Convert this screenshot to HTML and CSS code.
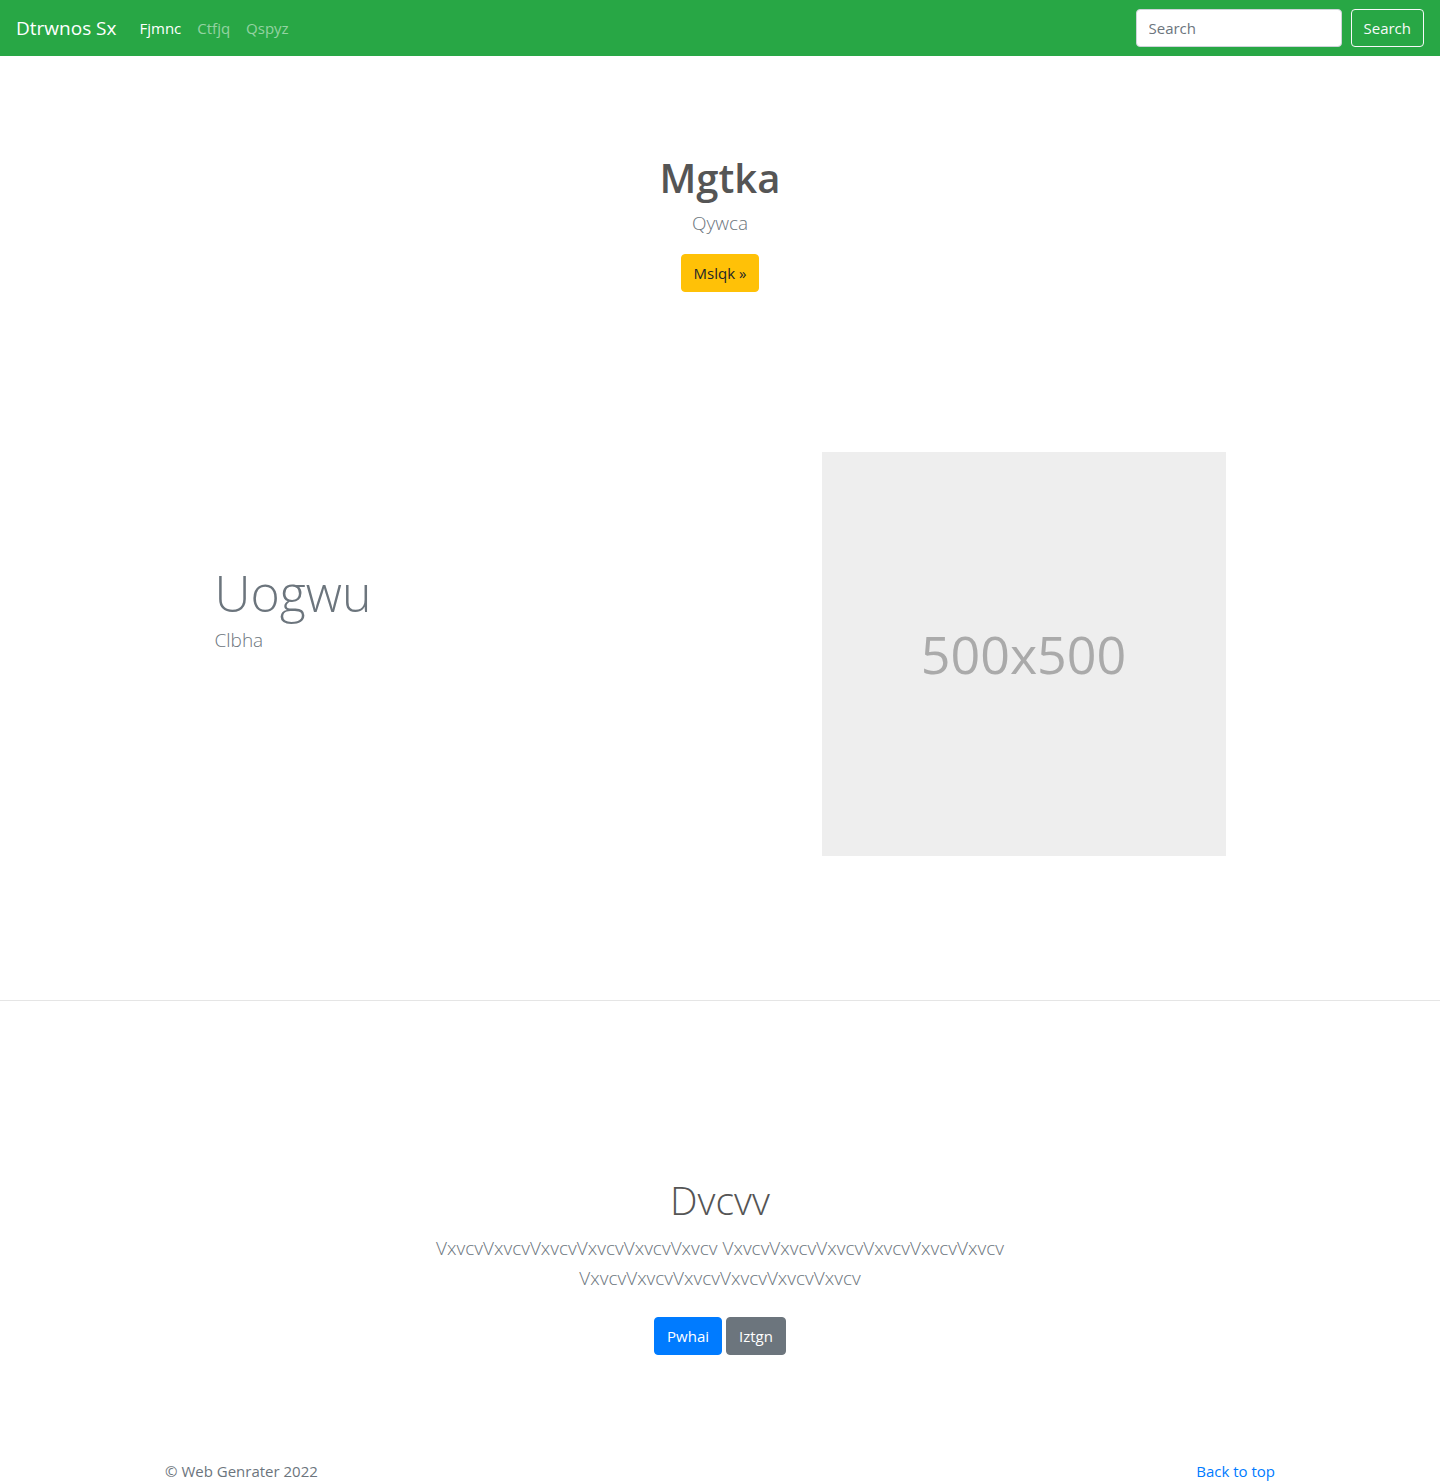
FILE: index.html
```html
<!DOCTYPE html>
<html lang="en">
<head>
<meta charset="utf-8">
<title>Dtrwnos Sx</title>
<link rel="stylesheet" href="styles.css">
</head>
<body>
<nav class="navbar">
  <a class="brand" href="#">Dtrwnos Sx</a>
  <ul class="nav-links">
    <li><a class="nav-link active" href="#">Fjmnc</a></li>
    <li><a class="nav-link" href="#">Ctfjq</a></li>
    <li><a class="nav-link" href="#">Qspyz</a></li>
  </ul>
  <form class="search">
    <input class="search-input" type="text" placeholder="Search">
    <button class="btn btn-outline-light" type="button">Search</button>
  </form>
</nav>

<section class="hero">
  <h1 class="hero-title">Mgtka</h1>
  <p class="lead">Qywca</p>
  <a class="btn btn-warning" href="#">Mslqk &raquo;</a>
</section>

<section class="feature">
  <div class="feature-text">
    <h2 class="feature-title">Uogwu</h2>
    <p class="lead muted feature-lead">Clbha</p>
  </div>
  <div class="feature-image">500x500</div>
</section>

<hr class="divider">

<section class="album">
  <h1 class="album-title">Dvcvv</h1>
  <p class="lead muted album-lead">VxvcvVxvcvVxvcvVxvcvVxvcvVxvcv VxvcvVxvcvVxvcvVxvcvVxvcvVxvcv VxvcvVxvcvVxvcvVxvcvVxvcvVxvcv</p>
  <div class="album-buttons">
    <a class="btn btn-primary" href="#">Pwhai</a>
    <a class="btn btn-secondary" href="#">Iztgn</a>
  </div>
</section>

<footer class="footer">
  <p class="copy">&copy; Web Genrater 2022</p>
  <a class="back" href="#">Back to top</a>
</footer>
</body>
</html>
```

FILE: styles.css
```css
* { box-sizing: border-box; }

html, body {
  margin: 0;
  padding: 0;
}

body {
  font-family: "Open Sans", "Noto Sans", sans-serif;
  font-size: 16px;
  line-height: 1.5;
  color: #212529;
  background: #fff;
}

a { text-decoration: none; }

.navbar {
  height: 56px;
  background: #28a745;
  display: flex;
  align-items: center;
  padding: 0 16px;
}

.brand {
  color: #fff;
  font-size: 19px;
  line-height: 30px;
  margin-right: 15px;
}

.nav-links {
  list-style: none;
  margin: 0;
  padding: 0;
  display: flex;
  flex: 1;
}

.nav-link {
  display: block;
  padding: 8px 8px;
  font-size: 15px;
  color: rgba(255, 255, 255, 0.5);
}

.nav-link.active { color: #fff; }

.search {
  display: flex;
  align-items: center;
  gap: 9px;
}

.search-input {
  width: 206px;
  height: 38px;
  border: 1px solid #ced4da;
  border-radius: 4px;
  padding: 6px 12px;
  font-family: inherit;
  font-size: 15px;
  color: #495057;
  background: #fff;
}

.search-input::placeholder { color: #6c757d; }

.btn {
  display: inline-block;
  height: 38px;
  padding: 0 12px;
  font-family: inherit;
  font-size: 15px;
  line-height: 36px;
  border: 1px solid transparent;
  border-radius: 4px;
  cursor: pointer;
}

.btn-outline-light {
  background: transparent;
  color: #f8f9fa;
  border-color: #f8f9fa;
}

.btn-warning {
  background: #ffc107;
  border-color: #ffc107;
  color: #212529;
}

.btn-primary {
  background: #007bff;
  border-color: #007bff;
  color: #fff;
}

.btn-secondary {
  background: #6c757d;
  border-color: #6c757d;
  color: #fff;
}

.lead {
  font-size: 19px;
  font-weight: 300;
  line-height: 30px;
  margin: 0;
}

.muted { color: #6c757d; }

.hero {
  text-align: center;
  padding-top: 98px;
}

.hero-title {
  margin: 0 0 6px;
  font-size: 40px;
  line-height: 48px;
  font-weight: 600;
  color: #555;
}

.hero .lead {
  color: #6c757d;
  margin-bottom: 16px;
}

.feature {
  width: 1011px;
  margin: 160px auto 0;
  display: flex;
  justify-content: space-between;
  align-items: flex-start;
}

.feature-text {
  padding-top: 107px;
}

.feature-title {
  margin: 0;
  font-size: 50px;
  line-height: 68px;
  font-weight: 300;
  color: #6c757d;
}

.feature-lead {
  line-height: 26px;
}

.feature-image {
  width: 404px;
  height: 404px;
  background: #eee;
  color: #aaa;
  font-size: 52px;
  display: flex;
  align-items: center;
  justify-content: center;
}

.divider {
  margin: 144px 0 0;
  border: 0;
  border-top: 1px solid #e5e5e5;
  height: 0;
}

.album {
  text-align: center;
  padding-top: 175px;
}

.album-title {
  margin: 0 0 9px;
  font-size: 39px;
  line-height: 48px;
  font-weight: 300;
  color: #555;
}

.album-lead {
  width: 600px;
  margin: 0 auto 24px;
}

.album-buttons {
  display: flex;
  justify-content: center;
  gap: 4px;
}

.footer {
  width: 1110px;
  margin: 104px auto 0;
  display: flex;
  justify-content: space-between;
  align-items: flex-start;
}

.copy {
  margin: 0;
  color: #6c757d;
  font-size: 15px;
  line-height: 24px;
}

.back {
  color: #007bff;
  font-size: 15px;
  line-height: 24px;
}
```
